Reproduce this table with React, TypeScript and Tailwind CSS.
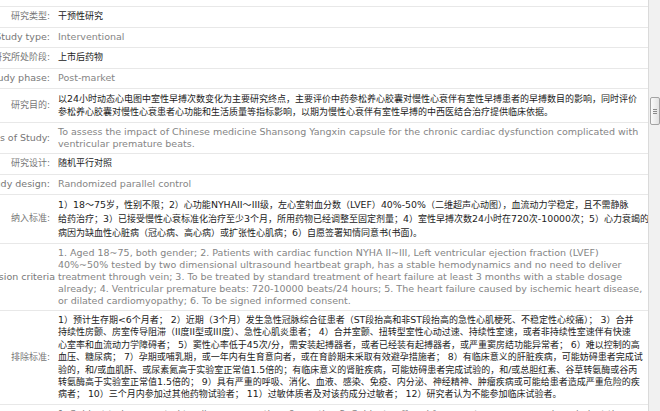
import React from 'react';

type Row = {
    label: string;
    lines: string[];
    zh?: boolean;
    tight?: boolean;
    labelClass?: string;
};

// line breaks follow the source page
const ROWS: Row[] = [
    { label: 'Disease code:', lines: ['\u00a0'] },
    { label: '研究类型:', lines: ['干预性研究'], zh: true },
    { label: 'Study type:', lines: ['Interventional'] },
    { label: '研究所处阶段:', lines: ['上市后药物'], zh: true },
    { label: 'Study phase:', lines: ['Post-market'] },
    {
        label: '研究目的:',
        zh: true,
        lines: [
            '以24小时动态心电图中室性早搏次数变化为主要研究终点，主要评价中药参松养心胶囊对慢性心衰伴有室性早搏患者的早搏数目的影响，同时评价',
            '参松养心胶囊对慢性心衰患者心功能和生活质量等指标影响，以期为慢性心衰伴有室性早搏的中西医结合治疗提供临床依据。',
        ],
    },
    {
        label: 'Objectives of Study:',
        lines: [
            'To assess the impact of Chinese medicine Shansong Yangxin capsule for the chronic cardiac dysfunction complicated with',
            'ventricular premature beats.',
        ],
    },
    { label: '研究设计:', lines: ['随机平行对照'], zh: true },
    { label: 'Study design:', lines: ['Randomized parallel control'] },
    {
        label: '纳入标准:',
        zh: true,
        lines: [
            '1）18～75岁，性别不限；2）心功能NYHAII～III级，左心室射血分数（LVEF）40%-50%（二维超声心动图），血流动力学稳定，且不需静脉',
            '给药治疗；3）已接受慢性心衰标准化治疗至少3个月，所用药物已经调整至固定剂量；4）室性早搏次数24小时在720次-10000次；5）心力衰竭的',
            '病因为缺血性心脏病（冠心病、高心病）或扩张性心肌病；6）自愿签署知情同意书(书面)。',
        ],
    },
    {
        label: 'Inclusion criteria',
        labelClass: 'mr-[-5px]',
        lines: [
            '1. Aged 18~75, both gender; 2. Patients with cardiac function NYHA II~III, Left ventricular ejection fraction (LVEF)',
            '40%~50% tested by two dimensional ultrasound heartbeat graph, has a stable hemodynamics and no need to deliver',
            'treatment through vein; 3. To be treated by standard treatment of heart failure at least 3 months with a stable dosage',
            'already; 4. Ventricular premature beats: 720-10000 beats/24 hours; 5. The heart failure caused by ischemic heart disease,',
            'or dilated cardiomyopathy; 6. To be signed informed consent.',
        ],
    },
    {
        label: '排除标准:',
        zh: true,
        tight: true,
        lines: [
            '1）预计生存期<6个月者； 2）近期（3个月）发生急性冠脉综合征患者（ST段抬高和非ST段抬高的急性心肌梗死、不稳定性心绞痛）； 3）合并',
            '持续性房颤、房室传导阻滞（II度II型或III度）、急性心肌炎患者； 4）合并室颤、扭转型室性心动过速、持续性室速，或者非持续性室速伴有快速',
            '心室率和血流动力学障碍者； 5）窦性心率低于45次/分，需安装起搏器者，或者已经装有起搏器者，或严重窦房结功能异常者； 6）难以控制的高',
            '血压、糖尿病； 7）孕期或哺乳期，或一年内有生育意向者，或在育龄期未采取有效避孕措施者； 8）有临床意义的肝脏疾病，可能妨碍患者完成试',
            '验的，和/或血肌酐、或尿素氮高于实验室正常值1.5倍的；有临床意义的肾脏疾病，可能妨碍患者完成试验的，和/或总胆红素、谷草转氨酶或谷丙',
            '转氨酶高于实验室正常值1.5倍的； 9）具有严重的呼吸、消化、血液、感染、免疫、内分泌、神经精神、肿瘤疾病或可能给患者造成严重危险的疾',
            '病者； 10）三个月内参加过其他药物试验者； 11）过敏体质者及对该药成分过敏者； 12）研究者认为不能参加临床试验者。',
        ],
    },
    {
        label: 'Exclusion criteria',
        labelClass: 'mr-[-5px]',
        lines: [
            '1. Subject to be expected to alive no more than 6 months; 2. Subject suffered from acute coronary syndrem in last three',
            'months; 3. Subject with persistent atrial fibrillation or atrioventricular block.',
        ],
    },
];

const zhFont = "font-['DejaVu_Sans','Noto_Sans_CJK_SC',sans-serif]";

// latin runs inside the chinese text come out a little wider in the source (Verdana next to SimSun)
const ZhLine: React.FC<{ text: string }> = ({ text }) => (
    <>
        {text.split(/([A-Za-z0-9%.\-/<]+)/).map((part, i) =>
            i % 2 === 1 ? (
                <span key={i} className="text-[9.4px]">
                    {part}
                </span>
            ) : (
                part
            )
        )}
    </>
);

const TableRow: React.FC<{ row: Row; first?: boolean }> = ({ row, first }) => {
    const valueText = row.zh
        ? `text-[9px] text-[#222] ${row.tight ? 'leading-[12.4px]' : 'leading-[13px]'}`
        : 'text-[9.5px] leading-[12px] text-[#858585]';
    return (
        <div className={`flex min-h-[20.5px] border-b border-[#e8e8e8] ${first ? '-mt-[13.5px]' : ''}`}>
            <div className="flex w-[50px] shrink-0 items-center justify-end overflow-visible whitespace-nowrap">
                <span className={`shrink-0 text-[#777] ${row.zh ? 'text-[9px]' : 'text-[9.5px]'} ${row.labelClass ?? ''}`}>
                    {row.label}
                </span>
            </div>
            <div className={`flex min-w-0 flex-1 flex-col justify-center overflow-hidden py-[3px] pl-[8px] pr-[4px] ${valueText}`}>
                {row.lines.map((line, i) => (
                    <div key={i} className="whitespace-nowrap">
                        {row.zh ? <ZhLine text={line} /> : line}
                    </div>
                ))}
            </div>
        </div>
    );
};

export default function App() {
    return (
        <div className={`flex h-[411px] w-[660px] overflow-hidden bg-white ${zhFont}`}>
            <div className="min-w-0 flex-1 overflow-hidden">
                {ROWS.map((r, i) => (
                    <TableRow key={r.label} row={r} first={i === 0} />
                ))}
            </div>
            <div className="flex w-[12px] shrink-0 flex-col border-l border-[#dadada] bg-[#f1f1f1] pt-[97px]">
                <div className="mx-auto flex h-[28px] w-[10px] flex-col items-center justify-center gap-[1px] rounded-[2px] border border-[#a3a3a3] bg-gradient-to-r from-[#fafafa] to-[#e2e2e2]">
                    <span className="h-px w-[4px] bg-[#8a8a8a]" />
                    <span className="h-px w-[4px] bg-[#8a8a8a]" />
                    <span className="h-px w-[4px] bg-[#8a8a8a]" />
                </div>
            </div>
        </div>
    );
}
